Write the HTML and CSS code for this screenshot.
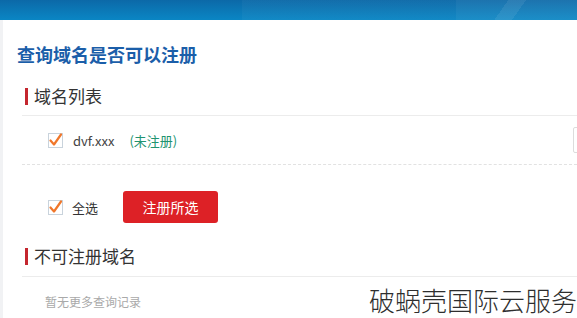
FILE: index.html
```html
<!doctype html>
<html lang="zh-CN">
  <head>
    <meta charset="utf-8" />
    <meta name="viewport" content="width=device-width, initial-scale=1.0" />
    <title>查询域名是否可以注册</title>
    <link rel="stylesheet" href="styles.css">
  </head>

  <body>
    <div class="top_banner"></div>
    <div class="panel">
      <div class="panel_title">查询域名是否可以注册</div>

      <div class="section">
        <div class="section_head"><span class="head_bar"></span>域名列表</div>
        <div class="domain_row">
          <span class="check">
            <svg width="15" height="16" viewBox="0 0 15 16">
              <rect x="0.5" y="1.5" width="14" height="14" fill="#fff" stroke="#c9d3dc" />
              <path d="M2.5 8.5 L6 12.5 L13 2.5" fill="none" stroke="#f0772b" stroke-width="2.2" stroke-linecap="round" stroke-linejoin="round" />
            </svg>
          </span>
          <span class="domain_name">dvf.xxx</span>
          <span class="domain_state">(未注册)</span>
          <span class="row_tail"></span>
        </div>
        <div class="action_row">
          <span class="check">
            <svg width="15" height="16" viewBox="0 0 15 16">
              <rect x="0.5" y="1.5" width="14" height="14" fill="#fff" stroke="#c9d3dc" />
              <path d="M2.5 8.5 L6 12.5 L13 2.5" fill="none" stroke="#f0772b" stroke-width="2.2" stroke-linecap="round" stroke-linejoin="round" />
            </svg>
          </span>
          <span class="select_all">全选</span>
          <div class="register_btn">注册所选</div>
        </div>
      </div>

      <div class="section">
        <div class="section_head"><span class="head_bar"></span>不可注册域名</div>
        <div class="empty_text">暂无更多查询记录</div>
      </div>

      <div class="watermark">破蜗壳国际云服务</div>
    </div>
  </body>
</html>
```

FILE: styles.css
```css
body {
  margin: 0;
  background-color: #fff;
  font-family: "Noto Sans CJK SC", "Liberation Sans", sans-serif;
  color: #333;
}

.top_banner {
  height: 20px;
  background:
    linear-gradient(125deg, transparent 0 86%, rgba(255, 255, 255, 0.07) 86% 89%, transparent 89%),
    linear-gradient(90deg, transparent 0 42%, rgba(255, 255, 255, 0.03) 42% 79%, rgba(255, 255, 255, 0.07) 79%),
    linear-gradient(180deg, #0c69a8, #0a86c4);
}

.panel {
  position: relative;
  height: 298px;
  overflow: hidden;
  border-left: 3px solid #f1f2f4;
  box-sizing: border-box;
  padding-left: 14px;
}

.panel_title {
  margin-top: 22px;
  font-size: 18px;
  line-height: 24px;
  font-weight: bold;
  color: #1b5ea9;
}

.section {
  margin-left: 5px;
}

.section_head {
  display: flex;
  align-items: center;
  margin-top: 18px;
  padding-left: 3px;
  padding-bottom: 7px;
  border-bottom: 1px solid #ececec;
  font-size: 17px;
  line-height: 24px;
  color: #333;
}

.head_bar {
  width: 3px;
  height: 17px;
  background-color: #c4262e;
  margin-right: 6px;
}

.domain_row {
  display: flex;
  align-items: center;
  height: 48px;
  padding-left: 26px;
  border-bottom: 1px dashed #e2e2e2;
  font-size: 13px;
}

.check {
  display: flex;
  width: 15px;
  height: 16px;
}

.domain_name {
  margin-left: 10px;
  color: #444;
}

.domain_state {
  margin-left: 15px;
  color: #21936f;
}

.row_tail {
  margin-left: auto;
  width: 40px;
  height: 24px;
  margin-right: -38px;
  border: 1px solid #dcdcdc;
  border-radius: 2px;
}

.action_row {
  display: flex;
  align-items: center;
  margin-top: 26px;
  padding-left: 26px;
  font-size: 13px;
}

.select_all {
  margin-left: 9px;
  color: #333;
}

.register_btn {
  margin-left: 25px;
  width: 95px;
  height: 32px;
  display: flex;
  justify-content: center;
  align-items: center;
  background-color: #dd2126;
  border-radius: 3px;
  color: #fff;
  font-size: 14px;
}

.section + .section .section_head {
  margin-top: 21px;
  padding-bottom: 8px;
}

.empty_text {
  margin-top: 16px;
  padding-left: 23px;
  font-size: 12px;
  line-height: 18px;
  color: #a9a9a9;
}

.watermark {
  position: absolute;
  right: 0;
  bottom: 2px;
  font-size: 26px;
  line-height: 32px;
  font-weight: 300;
  color: #2e2e2e;
  background-color: #fff;
}
```
